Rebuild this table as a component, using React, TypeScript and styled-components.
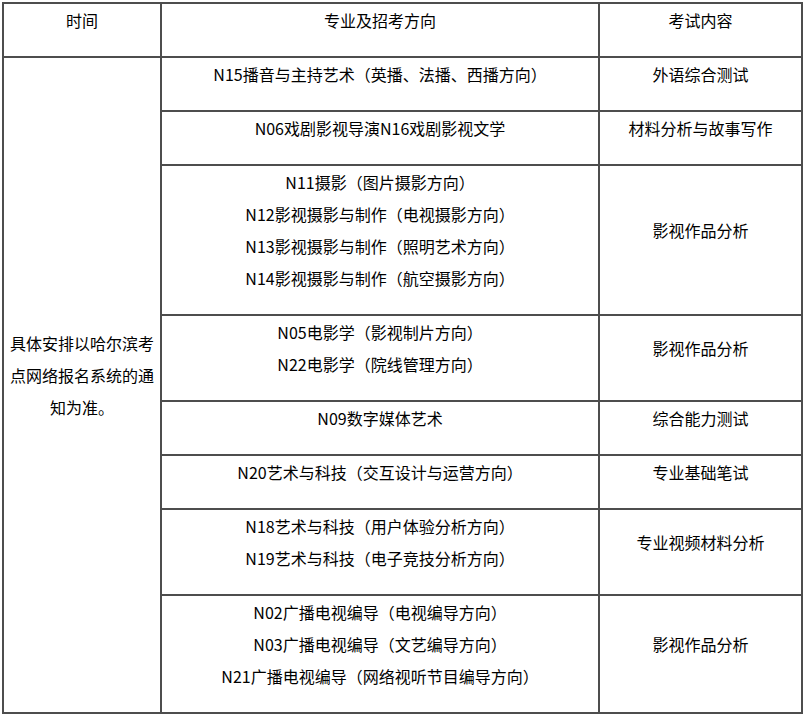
import { ReactElement } from 'react';
import styled, { createGlobalStyle } from 'styled-components';

const GlobalStyle = createGlobalStyle`
  html, body {
    margin: 0;
    padding: 0;
    background: #ffffff;
  }
  body {
    font-family: "Noto Sans CJK SC", "Microsoft YaHei", sans-serif;
    color: #000;
  }
`;

const Styled = {
  Page: styled.div`
    padding: 2px 0 0 2px;
  `,
  Table: styled.table`
    width: 799px;
    table-layout: fixed;
    border-collapse: collapse;
    font-size: 16px;
    line-height: 32px;
  `,
  Cell: styled.td<{ $valign?: 'top' | 'middle' }>`
    border: 2px solid #4d4d4d;
    padding: 0 4px 20px;
    text-align: center;
    vertical-align: ${({ $valign }) => $valign ?? 'top'};
  `,
  Line: styled.div`
    white-space: nowrap;
  `,
};

type Row = { majors: string[]; exam: string };

const rows: Row[] = [
  { majors: ['N15播音与主持艺术（英播、法播、西播方向）'], exam: '外语综合测试' },
  { majors: ['N06戏剧影视导演N16戏剧影视文学'], exam: '材料分析与故事写作' },
  {
    majors: [
      'N11摄影（图片摄影方向）',
      'N12影视摄影与制作（电视摄影方向）',
      'N13影视摄影与制作（照明艺术方向）',
      'N14影视摄影与制作（航空摄影方向）',
    ],
    exam: '影视作品分析',
  },
  {
    majors: ['N05电影学（影视制片方向）', 'N22电影学（院线管理方向）'],
    exam: '影视作品分析',
  },
  { majors: ['N09数字媒体艺术'], exam: '综合能力测试' },
  { majors: ['N20艺术与科技（交互设计与运营方向）'], exam: '专业基础笔试' },
  {
    majors: ['N18艺术与科技（用户体验分析方向）', 'N19艺术与科技（电子竞技分析方向）'],
    exam: '专业视频材料分析',
  },
  {
    majors: [
      'N02广播电视编导（电视编导方向）',
      'N03广播电视编导（文艺编导方向）',
      'N21广播电视编导（网络视听节目编导方向）',
    ],
    exam: '影视作品分析',
  },
];

export default function App(): ReactElement {
  return (
    <Styled.Page>
      <GlobalStyle />
      <Styled.Table>
        <colgroup>
          <col style={{ width: 158 }} />
          <col style={{ width: 438 }} />
          <col style={{ width: 203 }} />
        </colgroup>
        <tbody>
          <tr>
            <Styled.Cell>时间</Styled.Cell>
            <Styled.Cell>专业及招考方向</Styled.Cell>
            <Styled.Cell>考试内容</Styled.Cell>
          </tr>
          {rows.map((row, i) => (
            <tr key={i}>
              {i === 0 && (
                <Styled.Cell rowSpan={rows.length} $valign="middle">
                  具体安排以哈尔滨考点网络报名系统的通知为准。
                </Styled.Cell>
              )}
              <Styled.Cell>
                {row.majors.map((m) => (
                  <Styled.Line key={m}>{m}</Styled.Line>
                ))}
              </Styled.Cell>
              <Styled.Cell $valign="middle">{row.exam}</Styled.Cell>
            </tr>
          ))}
        </tbody>
      </Styled.Table>
    </Styled.Page>
  );
}
